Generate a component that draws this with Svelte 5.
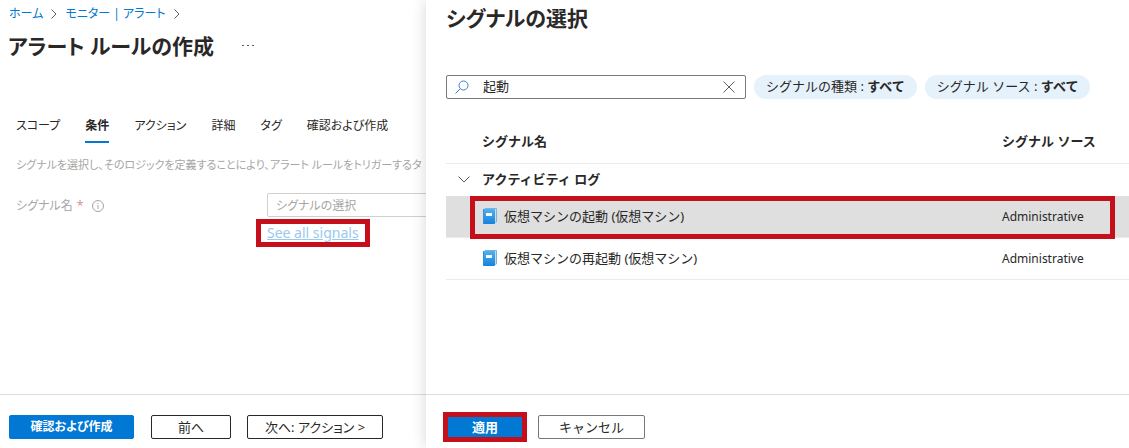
<script>
    let search = "起動";
    let selected = "start";

    const tabs = [
        { id: "scope", label: "スコープ" },
        { id: "condition", label: "条件" },
        { id: "action", label: "アクション" },
        { id: "details", label: "詳細" },
        { id: "tags", label: "タグ" },
        { id: "review", label: "確認および作成" }
    ];
    let activeTab = "condition";

    const filters = [
        { name: "シグナルの種類", value: "すべて" },
        { name: "シグナル ソース", value: "すべて" }
    ];

    const signals = [
        { id: "start", name: "仮想マシンの起動 (仮想マシン)", source: "Administrative" },
        { id: "restart", name: "仮想マシンの再起動 (仮想マシン)", source: "Administrative" }
    ];
</script>

<div class="layout">
    <main class="blade">
        <nav class="breadcrumb">
            <a href="#home">ホーム</a>
            <svg viewBox="0 0 6 10"><path d="M.5 .5 5 5 .5 9.5" /></svg>
            <a href="#monitor">モニター | アラート</a>
            <svg viewBox="0 0 6 10"><path d="M.5 .5 5 5 .5 9.5" /></svg>
        </nav>
        <header class="blade-header">
            <h1>アラート ルールの作成</h1>
            <button type="button" class="more" aria-label="その他">
                <svg viewBox="0 0 12 2"><path d="M0 0h2v1H0zM5 0h2v1H5zM10 0h2v1h-2z" /></svg>
            </button>
        </header>
        <div class="tabs" role="tablist">
            {#each tabs as tab}
                <button
                    type="button"
                    role="tab"
                    class="tab"
                    class:active={tab.id === activeTab}
                    aria-selected={tab.id === activeTab}
                    on:click={() => activeTab = tab.id}>{tab.label}</button>
            {/each}
        </div>
        <div class="form">
            <p>シグナルを選択し、そのロジックを定義することにより、アラート ルールをトリガーするタ</p>
            <div class="field">
                <label for="signal">
                    シグナル名 <span class="required">*</span>
                    <svg viewBox="0 0 12 12"><circle cx="6" cy="6" r="5.5" /><path d="M6 5v4M6 3v1" /></svg>
                </label>
                <div class="control">
                    <input id="signal" type="text" placeholder="シグナルの選択" />
                    <a class="marked" href="#signals">See all signals</a>
                </div>
            </div>
        </div>
        <footer>
            <button type="button" class="button primary review">確認および作成</button>
            <button type="button" class="button previous">前へ</button>
            <button type="button" class="button next">次へ: アクション &gt;</button>
        </footer>
    </main>

    <aside class="panel">
        <h2>シグナルの選択</h2>
        <div class="filters">
            <div class="search">
                <svg class="magnifier" viewBox="0 0 14 14"><circle cx="8.5" cy="5.5" r="4.5" /><path d="M5.3 8.7.5 13.5" /></svg>
                <input type="text" aria-label="検索" bind:value={search} />
                <button type="button" aria-label="クリア" on:click={() => search = ""}>
                    <svg viewBox="0 0 12 12"><path d="M.5.5l11 11M11.5.5l-11 11" /></svg>
                </button>
            </div>
            {#each filters as filter}
                <button type="button" class="pill">{filter.name} : <b>{filter.value}</b></button>
            {/each}
        </div>
        <table>
            <thead>
                <tr>
                    <th>シグナル名</th>
                    <th class="source">シグナル ソース</th>
                </tr>
            </thead>
            <tbody>
                <tr class="group">
                    <th colspan="2">
                        <div class="group-name">
                            <svg viewBox="0 0 12 7"><path d="M.5.5 6 6 11.5.5" /></svg>
                            アクティビティ ログ
                        </div>
                    </th>
                </tr>
                {#each signals as signal}
                    <tr class="signal" class:selected={signal.id === selected} on:click={() => selected = signal.id}>
                        <td>
                            <div class="signal-name">
                                <svg viewBox="0 0 14 16">
                                    <defs>
                                        <linearGradient id="book-{signal.id}" x1="0" y1="0" x2="0" y2="1">
                                            <stop offset="0" stop-color="#50b0f0" />
                                            <stop offset="1" stop-color="#1583dc" />
                                        </linearGradient>
                                    </defs>
                                    <path d="M2 0h11a1 1 0 0 1 1 1v13l-2 1V2H1z" fill="#7fb2d8" />
                                    <path d="M12 1h1v13h-1z" fill="#c3def0" />
                                    <rect y="1" width="12" height="15" rx="1" fill="url(#book-{signal.id})" />
                                    <path d="M0 2a1 1 0 0 1 1-1v15a1 1 0 0 1-1-1z" fill="#3390d8" />
                                    <path d="M3 5h6v3H3z" fill="#f4faff" />
                                    <path d="M4 6h4v1H4z" fill="#fff" />
                                </svg>
                                {signal.name}
                            </div>
                        </td>
                        <td class="signal-source">{signal.source}</td>
                    </tr>
                {/each}
            </tbody>
        </table>
        <footer>
            <button type="button" class="button primary apply marked">適用</button>
            <button type="button" class="button cancel">キャンセル</button>
        </footer>
    </aside>
</div>

<style>
    :global(body) {
        margin: 0;
        background: #fff;
    }

    .layout {
        display: grid;
        grid-template-columns: minmax(0, 20fr) minmax(0, 33fr);
        min-height: 100vh;
        color: #292827;
        font-family: "Noto Sans", "Noto Sans CJK JP", sans-serif;
        font-size: 13px;
        line-height: 20px;
        white-space: nowrap;
        overflow: hidden;
    }

    a {
        color: #0078d4;
        text-decoration: none;
    }

    button,
    input {
        box-sizing: border-box;
        margin: 0;
        padding: 0;
        border: 0;
        background: none;
        color: inherit;
        font: inherit;
        font-feature-settings: inherit;
    }

    h1,
    h2,
    p {
        margin: 0;
    }

    h1,
    h2 {
        font-size: 21px;
        font-weight: 600;
        line-height: 32px;
        font-feature-settings: "palt";
    }

    svg {
        flex: none;
        fill: none;
        stroke: #605e5c;
    }

    .blade {
        display: flex;
        flex-direction: column;
        min-width: 0;
        overflow: hidden;
        font-size: 12px;
        font-feature-settings: "palt";
    }

    .breadcrumb {
        display: flex;
        align-items: center;
        gap: 8px;
        padding: 4px 9px 0;
    }

    .breadcrumb svg {
        width: 6px;
        height: 10px;
    }

    .blade-header {
        display: flex;
        align-items: center;
        gap: 28px;
        padding: 6px 8px 0;
    }

    .more svg {
        display: block;
        width: 12px;
        height: 2px;
        fill: #605e5c;
        stroke: none;
    }

    .tabs {
        display: flex;
        gap: 25px;
        padding: 52px 16px 0;
    }

    .tab {
        height: 29px;
        padding-bottom: 3px;
        border-bottom: 2px solid transparent;
    }

    .tab.active {
        border-bottom-color: #0078d4;
        font-weight: 600;
    }

    .form {
        flex: 1;
        padding: 12px 16px 0;
        color: #a6a5a4;
    }

    .form p {
        font-size: 11px;
    }

    .field {
        display: flex;
        padding-top: 18px;
    }

    .field label {
        display: flex;
        flex: none;
        align-items: center;
        gap: 4px;
        width: 251px;
        height: 26px;
    }

    .field label svg {
        width: 12px;
        height: 12px;
        margin-left: 5px;
        stroke: #a6a5a4;
    }

    .required {
        color: #d99295;
    }

    .control {
        display: flex;
        flex: none;
        flex-direction: column;
        align-items: flex-start;
        gap: 6px;
        width: 320px;
    }

    .control input {
        width: 100%;
        height: 24px;
        padding: 0 8px;
        border: 1px solid #d2d0ce;
        border-radius: 2px;
    }

    .control input::placeholder {
        color: #a6a5a4;
    }

    .control a {
        color: #99c9ee;
        font-size: 14px;
        text-decoration: underline;
    }

    /* red frame round the things to click */
    .marked,
    .signal td {
        position: relative;
    }

    .marked::after,
    .selected td:first-child::after {
        content: "";
        position: absolute;
        z-index: 1;
        border: 5px solid #c50f1a;
        pointer-events: none;
    }

    .control .marked::after {
        inset: -4px -11px;
    }

    footer {
        display: flex;
        padding: 20px 9px 9px;
        border-top: 1px solid #dcdcdc;
    }

    .button {
        height: 24px;
        border: 1px solid #292827;
        border-radius: 2px;
        font-size: 13px;
        line-height: 20px;
    }

    .primary {
        border-color: #0078d4;
        background: #0078d4;
        color: #fff;
        font-weight: 600;
    }

    .review {
        width: 125px;
        margin-right: 17px;
        font-size: 12px;
    }

    .previous {
        width: 80px;
        margin-right: 16px;
    }

    .next {
        width: 136px;
    }

    .panel {
        display: flex;
        z-index: 1;
        flex-direction: column;
        min-width: 0;
        background: #fff;
        box-shadow: 0 0 14px rgba(0, 0, 0, 0.16);
    }

    .panel h2 {
        padding: 2px 20px 0;
    }

    .filters {
        display: flex;
        gap: 8px;
        padding: 41px 20px 0;
    }

    .search {
        display: flex;
        box-sizing: border-box;
        align-items: center;
        width: 300px;
        height: 24px;
        padding: 0 10px 0 8px;
        border: 1px solid #7a7876;
        border-radius: 2px;
    }

    .search input {
        flex: 1;
        min-width: 0;
        height: 22px;
        padding: 0 0 4px 14px;
        outline: 0;
    }

    .search svg {
        display: block;
        width: 12px;
        height: 12px;
    }

    .search .magnifier {
        width: 14px;
        height: 14px;
        stroke: #3b83c8;
    }

    .pill {
        height: 24px;
        padding: 0 12px 2px;
        border-radius: 12px;
        background: #e5f1fb;
    }

    .pill b {
        font-weight: 600;
    }

    table {
        width: calc(100% - 20px);
        margin: 20px 0 0 20px;
        border-collapse: separate;
        border-spacing: 0;
        table-layout: fixed;
    }

    th,
    td {
        height: 41px;
        padding: 0;
        border-bottom: 1px solid #edebe9;
        font-weight: 400;
        text-align: left;
    }

    th {
        font-weight: 600;
    }

    thead th {
        height: 44px;
    }

    thead th:first-child {
        padding-left: 36px;
    }

    .source {
        width: 127px;
    }

    .group th {
        height: 32px;
        border-bottom: 0;
    }

    .group-name,
    .signal-name {
        display: flex;
        align-items: center;
        padding-bottom: 2px;
    }

    .group-name {
        gap: 12px;
        padding-left: 12px;
    }

    .group-name svg {
        width: 12px;
        height: 7px;
    }

    .signal-name {
        gap: 7px;
        padding-left: 37px;
    }

    .signal-name svg {
        width: 14px;
        height: 16px;
        stroke: none;
    }

    .signal-source {
        font-size: 12px;
    }

    .selected td {
        background: #dfdfdf;
    }

    /* spans the source column too, short of the panel's edge */
    .selected td:first-child::after {
        inset: 0 -113px -2px 24px;
    }

    .panel footer {
        margin-top: auto;
        padding-left: 20px;
    }

    .apply {
        width: 78px;
        margin-right: 14px;
    }

    .apply::after {
        inset: -4px;
    }

    .cancel {
        width: 107px;
        border-color: #7a7876;
    }
</style>
